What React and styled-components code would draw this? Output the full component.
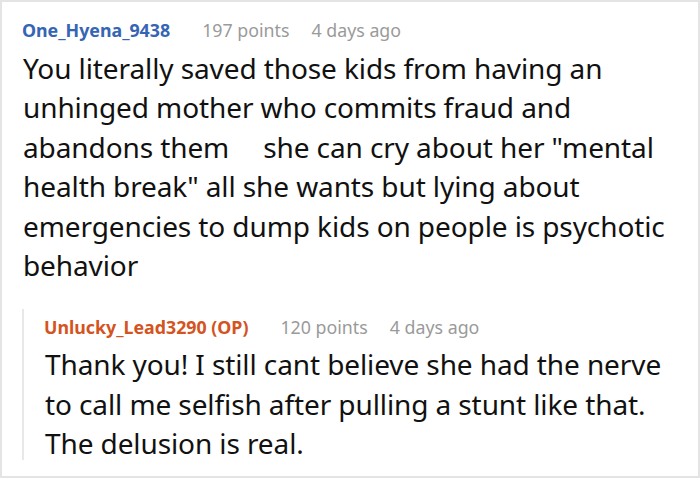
import React from 'react';
import styled, { createGlobalStyle } from 'styled-components';

const GlobalStyle = createGlobalStyle`
  html, body {
    margin: 0;
    padding: 0;
    background: #fff;
  }
`;

const Card = styled.div`
  width: 700px;
  height: 478px;
  box-sizing: border-box;
  border: 2px solid #e4e4e4;
  padding: 16px 0 0 20px;
  font-family: "Noto Sans", "Open Sans", sans-serif;
  color: #111;
  overflow: hidden;
`;

const Comment = styled.div`
  display: flex;
  flex-direction: column;
`;

const Meta = styled.div`
  display: flex;
  align-items: baseline;
  gap: 22px;
  font-size: 17.8px;
  line-height: 24px;
  white-space: nowrap;
`;

const User = styled.span`
  font-weight: 700;
  margin-right: 10px;
  color: ${p => (p.$op ? '#d4531e' : '#3565b4')};
`;

const Muted = styled.span`
  color: #9a9a9a;
`;

const Body = styled.p`
  margin: 6.5px 0 0 1px;
  font-size: 28px;
  line-height: 39.5px;
  white-space: nowrap;
  letter-spacing: -0.1px;
`;

const Gap = styled.span`
  display: inline-block;
  width: 34px;
`;

const Reply = styled.div`
  margin-top: 23px;
  border-left: 2px solid #e8e8e8;
  padding: 6px 0 0 20px;
  height: 145px;
`;

export default function App() {
  return (
    <>
      <GlobalStyle />
      <Card>
        <Comment>
          <Meta>
            <User>One_Hyena_9438</User>
            <Muted>197 points</Muted>
            <Muted>4 days ago</Muted>
          </Meta>
          <Body>
            You literally saved those kids from having an<br />
            unhinged mother who commits fraud and<br />
            abandons them<Gap />she can cry about her "mental<br />
            health break" all she wants but lying about<br />
            emergencies to dump kids on people is psychotic<br />
            behavior
          </Body>
        </Comment>
        <Reply>
          <Meta>
            <User $op>Unlucky_Lead3290 (OP)</User>
            <Muted>120 points</Muted>
            <Muted>4 days ago</Muted>
          </Meta>
          <Body>
            Thank you! I still cant believe she had the nerve<br />
            to call me selfish after pulling a stunt like that.<br />
            The delusion is real.
          </Body>
        </Reply>
      </Card>
    </>
  );
}
